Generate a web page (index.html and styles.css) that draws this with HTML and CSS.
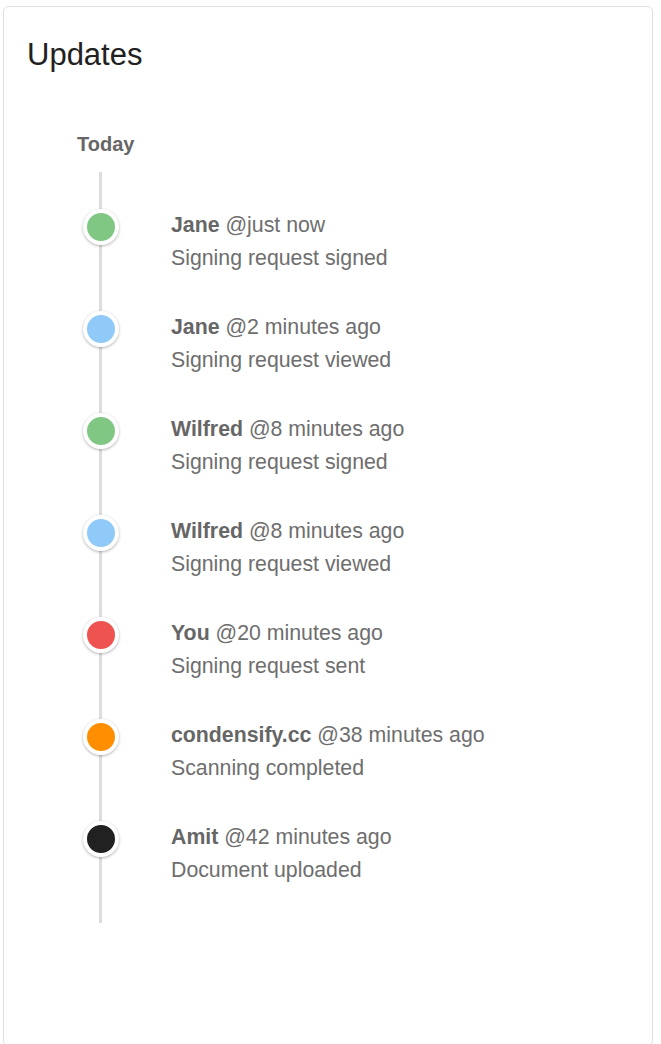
FILE: index.html
```html
<!DOCTYPE html>
<html lang="en">
<head>
<meta charset="utf-8">
<title>Updates</title>
<link rel="stylesheet" href="styles.css">
</head>
<body>
<div class="card">
  <h2 class="card-title">Updates</h2>
  <div class="day">Today</div>
  <ul class="timeline">
    <li class="item">
      <span class="dot green"></span>
      <div class="text">
        <div class="head"><b>Jane</b> @just now</div>
        <div class="desc">Signing request signed</div>
      </div>
    </li>
    <li class="item">
      <span class="dot blue"></span>
      <div class="text">
        <div class="head"><b>Jane</b> @2 minutes ago</div>
        <div class="desc">Signing request viewed</div>
      </div>
    </li>
    <li class="item">
      <span class="dot green"></span>
      <div class="text">
        <div class="head"><b>Wilfred</b> @8 minutes ago</div>
        <div class="desc">Signing request signed</div>
      </div>
    </li>
    <li class="item">
      <span class="dot blue"></span>
      <div class="text">
        <div class="head"><b>Wilfred</b> @8 minutes ago</div>
        <div class="desc">Signing request viewed</div>
      </div>
    </li>
    <li class="item">
      <span class="dot red"></span>
      <div class="text">
        <div class="head"><b>You</b> @20 minutes ago</div>
        <div class="desc">Signing request sent</div>
      </div>
    </li>
    <li class="item">
      <span class="dot orange"></span>
      <div class="text">
        <div class="head"><b>condensify.cc</b> @38 minutes ago</div>
        <div class="desc">Scanning completed</div>
      </div>
    </li>
    <li class="item">
      <span class="dot black"></span>
      <div class="text">
        <div class="head"><b>Amit</b> @42 minutes ago</div>
        <div class="desc">Document uploaded</div>
      </div>
    </li>
  </ul>
</div>
</body>
</html>
```
FILE: styles.css
```css
html, body {
  margin: 0;
  padding: 0;
  background: #ffffff;
}

body {
  font-family: "Liberation Sans", Arial, Helvetica, sans-serif;
  padding: 6px 8px 0 3px;
}

.card {
  border: 1px solid #e0e0e0;
  border-radius: 5px;
  min-height: 1040px;
  padding-top: 30px;
  box-sizing: border-box;
}

.card-title {
  margin: 0 0 0 23px;
  font-size: 31px;
  line-height: 36px;
  font-weight: 400;
  color: #212121;
}

.day {
  margin: 59px 0 0 73px;
  font-size: 20px;
  line-height: 24px;
  font-weight: 700;
  color: #666666;
}

.timeline {
  list-style: none;
  margin: 16px 0 0 95px;
  padding: 37px 0 0 0;
  border-left: 3px solid #dddddd;
}

.item {
  display: flex;
  align-items: flex-start;
  height: 102px;
}

.dot {
  flex: none;
  width: 28px;
  height: 28px;
  border: 4px solid #ffffff;
  border-radius: 50%;
  margin-left: -19.5px;
  box-shadow: 0 1px 3px rgba(0, 0, 0, 0.3);
}

.green { background: #81c784; }
.blue { background: #90caf9; }
.red { background: #ef5350; }
.orange { background: #ff8f00; }
.black { background: #212121; }

.text {
  margin: 0 0 0 52.5px;
  font-size: 21.3px;
  line-height: 33px;
  color: #6e6e6e;
}

.head b {
  font-weight: 700;
  color: #666666;
}
```
